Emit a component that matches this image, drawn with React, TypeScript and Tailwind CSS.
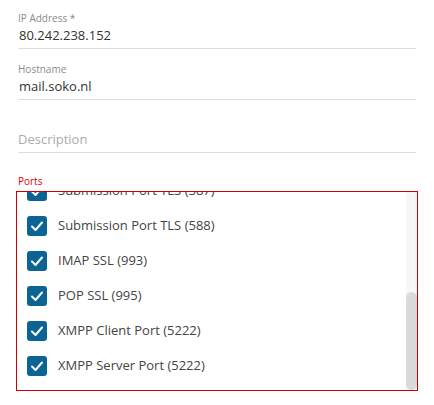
import React from 'react';

interface FieldProps {
  label?: string;
  value?: string;
  placeholder?: string;
  topPad: string;
}

const ports: string[] = [
  'SMTP (25)',
  'POP3 (110)',
  'IMAP (143)',
  'SMTP SSL (465)',
  'Submission Port (587)',
  'Submission Port TLS (587)',
  'Submission Port TLS (588)',
  'IMAP SSL (993)',
  'POP SSL (995)',
  'XMPP Client Port (5222)',
  'XMPP Server Port (5222)',
];

const Field: React.FC<FieldProps> = ({ label, value, placeholder, topPad }) => (
  <div className={`${topPad} pb-[3px] border-b border-[#dedede]`}>
    {label && <div className="text-[10px] leading-[14px] text-[#8a8a8a]">{label}</div>}
    {value ? (
      <div className="text-[13px] leading-[20px] text-[#333] pl-[1px]">{value}</div>
    ) : (
      <div className="text-[13px] leading-[20px] text-[#ababab]">{placeholder}</div>
    )}
  </div>
);

const Check: React.FC = () => (
  <span className="w-[20px] h-[20px] rounded-[3px] bg-[#0b6494] flex items-center justify-center shrink-0">
    <svg width="20" height="20" viewBox="0 0 20 20" fill="none">
      <polyline points="5,10.5 8.5,14 15,6.5" stroke="#fff" strokeWidth="2" strokeLinecap="round" strokeLinejoin="round" />
    </svg>
  </span>
);

export default function App() {
  return (
    <div
      className="w-[434px] h-[405px] bg-white px-[16px] overflow-hidden"
      style={{ fontFamily: '"Open Sans", "Noto Sans", sans-serif' }}
    >
      <div className="px-[2px]">
        <Field topPad="pt-[11px]" label="IP Address *" value="80.242.238.152" />
        <Field topPad="pt-[13px]" label="Hostname" value="mail.soko.nl" />
        <Field topPad="pt-[29px]" placeholder="Description" />
      </div>
      <div className="mt-[21px] px-[2px] text-[10px] leading-[14px] text-[#e00000]">Ports</div>
      <div className="mt-[3px] h-[200px] border border-[#cc0000] flex">
        <div className="flex-1 overflow-hidden flex flex-col justify-end pb-[7px]">
          {ports.map((p) => (
            <label key={p} className="h-[35px] shrink-0 flex items-center pl-[10px] gap-[11px] text-[13px] text-[#444]">
              <Check />
              <span>{p}</span>
            </label>
          ))}
        </div>
        <div className="w-[11px] bg-[#f7f7f7] flex flex-col justify-end">
          <div className="h-[98px] rounded-full bg-[#dadada]" />
        </div>
      </div>
    </div>
  );
}
